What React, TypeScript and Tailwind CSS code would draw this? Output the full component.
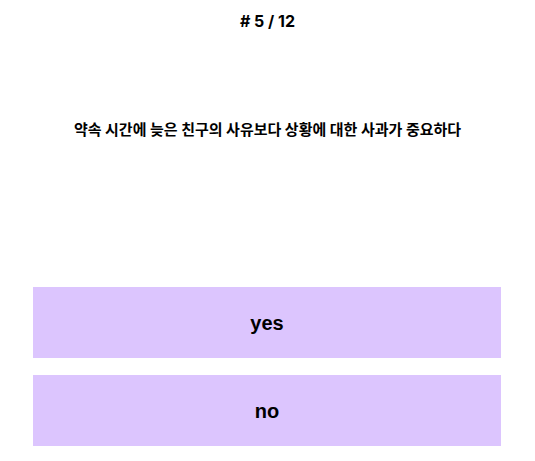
import React from 'react';

const answers = ['yes', 'no'];

export default function App() {
  return (
    <div className="min-h-[461px] bg-white flex flex-col items-center font-['Inter','Noto_Sans_CJK_KR',sans-serif] text-black">
      <div className="pt-[11px] text-[16px] font-bold leading-[20px]"># 5 / 12</div>
      <div className="mt-[89px] text-[15px] font-bold leading-[20px]">
        약속 시간에 늦은 친구의 사유보다 상황에 대한 사과가 중요하다
      </div>
      <div className="mt-[147px] self-start ml-[33px] w-[468px] flex flex-col gap-[17px]">
        {answers.map((a) => (
          <button
            key={a}
            className="h-[71px] w-full bg-[#dcc5fe] text-[20px] font-bold font-['Liberation_Sans',sans-serif] text-black"
          >
            {a}
          </button>
        ))}
      </div>
    </div>
  );
}
